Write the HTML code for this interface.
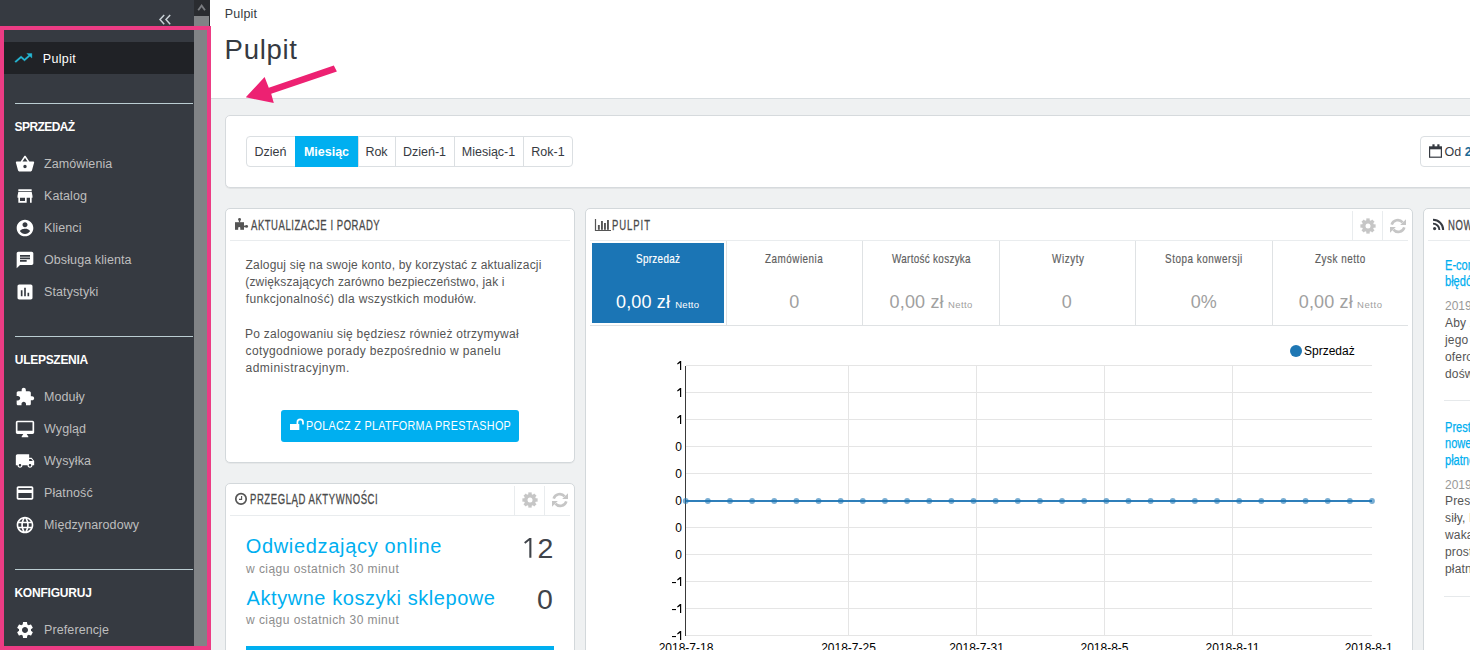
<!DOCTYPE html>
<html><head><meta charset="utf-8"><style>
html,body{margin:0;padding:0;}
body{width:1470px;height:650px;overflow:hidden;position:relative;background:#eff1f2;font-family:"Liberation Sans", sans-serif;}
.t{position:absolute;white-space:nowrap;line-height:1;font-family:"Liberation Sans", sans-serif;}
small{font-size:10px;}
.st{font-family:"Liberation Sans",sans-serif;}
</style></head><body>
<div style="position:absolute;left:210px;top:0px;width:1260px;height:98px;background:#fff"></div>
<div style="position:absolute;left:210px;top:98px;width:1260px;height:1px;background:#d8dde0"></div>
<div class="t" style="left:224.8px;top:8px;font-size:12.5px;color:#363a41;font-weight:400;letter-spacing:0.2px;">Pulpit</div>
<div class="t" style="left:224.6px;top:36px;font-size:27.5px;color:#363a41;font-weight:400;letter-spacing:0.72px;">Pulpit</div>
<div style="position:absolute;left:225px;top:115px;width:1300px;height:73px;background:#fff;border:1px solid #d6dadd;border-radius:5px;box-shadow:0 1px 0 rgba(0,0,0,.05);box-sizing:border-box"></div>
<div style="position:absolute;left:246px;top:136px;width:327px;height:31px;border:1px solid #dbdfe2;border-radius:4px;box-sizing:border-box;background:#fff"></div>
<div class="t" style="left:246px;top:146px;width:49px;text-align:center;font-size:12.5px;color:#363a41">Dzień</div>
<div style="position:absolute;left:295px;top:136px;width:63px;height:31px;background:#00aff0"></div>
<div class="t" style="left:295px;top:146px;width:63px;text-align:center;font-size:12.5px;font-weight:700;color:#fff">Miesiąc</div>
<div style="position:absolute;left:358px;top:137px;width:1px;height:29px;background:#dbdfe2"></div>
<div class="t" style="left:358px;top:146px;width:37px;text-align:center;font-size:12.5px;color:#363a41">Rok</div>
<div style="position:absolute;left:395px;top:137px;width:1px;height:29px;background:#dbdfe2"></div>
<div class="t" style="left:395px;top:146px;width:59px;text-align:center;font-size:12.5px;color:#363a41">Dzień-1</div>
<div style="position:absolute;left:454px;top:137px;width:1px;height:29px;background:#dbdfe2"></div>
<div class="t" style="left:454px;top:146px;width:69px;text-align:center;font-size:12.5px;color:#363a41">Miesiąc-1</div>
<div style="position:absolute;left:523px;top:137px;width:1px;height:29px;background:#dbdfe2"></div>
<div class="t" style="left:523px;top:146px;width:50px;text-align:center;font-size:12.5px;color:#363a41">Rok-1</div>
<div style="position:absolute;left:1420px;top:136px;width:80px;height:31px;border:1px solid #dbdfe2;border-radius:4px;box-sizing:border-box;background:#fff"></div>
<svg style="position:absolute;left:1428px;top:143px" width="15" height="16" viewBox="0 0 15 16"><rect x="1.6" y="5" width="11.8" height="9.2" fill="none" stroke="#363a41" stroke-width="1.2"/><rect x="1" y="3.3" width="13" height="3" fill="#363a41"/><rect x="4.4" y="1.3" width="2.2" height="3" fill="#363a41"/><rect x="9.3" y="1.3" width="2.2" height="3" fill="#363a41"/></svg>
<div class="t" style="left:1444.5px;top:146px;font-size:12.5px;color:#363a41;font-weight:400;letter-spacing:0px;">Od <b style="color:#1b6a95">2018</b></div>
<div style="position:absolute;left:225px;top:208px;width:350px;height:255px;background:#fff;border:1px solid #d3d8db;border-radius:5px;box-sizing:border-box;box-shadow:0 1px 0 rgba(0,0,0,.04)"></div>
<div style="position:absolute;left:230px;top:240px;width:340px;height:1px;background:#e9ecee"></div>
<svg style="position:absolute;left:234px;top:217px" width="16" height="14" viewBox="0 0 16 14"><g fill="#555"><rect x="1" y="5.2" width="9" height="7.6"/><circle cx="5.55" cy="2.5" r="1.45"/><rect x="4.9" y="3" width="1.3" height="2.5"/><rect x="10" y="8.6" width="2" height="1.6"/><circle cx="12.6" cy="9.4" r="1.45"/></g><path d="M4.2 12.9V11a1.05 1.05 0 0 1 2.1 0V12.9Z" fill="#fff"/></svg>
<div class="t" style="left:251.0px;top:218px;font-size:14px;color:#4a4a4a;font-weight:400;letter-spacing:0.786px;transform:scaleX(0.68);transform-origin:0 0;-webkit-text-stroke:0.3px #4a4a4a;">AKTUALIZACJE I PORADY</div>
<div class="t" style="left:245.6px;top:259px;font-size:12px;color:#555;font-weight:400;letter-spacing:0.178px;">Zaloguj się na swoje konto, by korzystać z aktualizacji</div>
<div class="t" style="left:245.3px;top:276px;font-size:12px;color:#555;font-weight:400;letter-spacing:0.161px;">(zwiększających zarówno bezpieczeństwo, jak i</div>
<div class="t" style="left:245.8px;top:293px;font-size:12px;color:#555;font-weight:400;letter-spacing:0.342px;">funkcjonalność) dla wszystkich modułów.</div>
<div class="t" style="left:245.0px;top:328px;font-size:12px;color:#555;font-weight:400;letter-spacing:0.256px;">Po zalogowaniu się będziesz również otrzymywał</div>
<div class="t" style="left:245.5px;top:345px;font-size:12px;color:#555;font-weight:400;letter-spacing:0.377px;">cotygodniowe porady bezpośrednio w panelu</div>
<div class="t" style="left:245.5px;top:362px;font-size:12px;color:#555;font-weight:400;letter-spacing:0.487px;">administracyjnym.</div>
<div style="position:absolute;left:281px;top:410px;width:238px;height:32px;background:#00aff0;border-radius:3px"></div>
<svg style="position:absolute;left:289px;top:418px" width="16" height="14" viewBox="0 0 16 14"><rect x="1" y="6" width="9.3" height="6" fill="#fff"/><path d="M8.4 6.2V4.2a2.8 2.8 0 0 1 5.6 0v2.4" fill="none" stroke="#fff" stroke-width="1.7"/></svg>
<div class="t" style="left:305.7px;top:420px;font-size:12px;color:#fff;font-weight:400;letter-spacing:0.332px;transform:scaleX(0.9);transform-origin:0 0;">POLACZ Z PLATFORMA PRESTASHOP</div>
<div style="position:absolute;left:225px;top:483px;width:350px;height:300px;background:#fff;border:1px solid #d3d8db;border-radius:5px;box-sizing:border-box;box-shadow:0 1px 0 rgba(0,0,0,.04)"></div>
<div style="position:absolute;left:230px;top:515px;width:340px;height:1px;background:#e9ecee"></div>
<svg style="position:absolute;left:233px;top:491px" width="16" height="16" viewBox="0 0 16 16"><circle cx="8" cy="7.9" r="5.2" fill="none" stroke="#555" stroke-width="1.7"/><path d="M8.6 5v3.4H6" fill="none" stroke="#555" stroke-width="1.1"/></svg>
<div class="t" style="left:250.25px;top:492px;font-size:14px;color:#4a4a4a;font-weight:400;letter-spacing:0.833px;transform:scaleX(0.68);transform-origin:0 0;-webkit-text-stroke:0.3px #4a4a4a;">PRZEGLĄD AKTYWNOŚCI</div>
<div style="position:absolute;left:514px;top:486px;width:1px;height:29px;background:#e9ecee"></div>
<div style="position:absolute;left:544px;top:486px;width:1px;height:29px;background:#e9ecee"></div>
<svg style="position:absolute;left:521px;top:491px" width="18" height="18" viewBox="-9 -9 18 18"><g fill="#c6c6c6"><rect x="-1.7" y="-7.6" width="3.4" height="4" transform="rotate(0)"/><rect x="-1.7" y="-7.6" width="3.4" height="4" transform="rotate(45)"/><rect x="-1.7" y="-7.6" width="3.4" height="4" transform="rotate(90)"/><rect x="-1.7" y="-7.6" width="3.4" height="4" transform="rotate(135)"/><rect x="-1.7" y="-7.6" width="3.4" height="4" transform="rotate(180)"/><rect x="-1.7" y="-7.6" width="3.4" height="4" transform="rotate(225)"/><rect x="-1.7" y="-7.6" width="3.4" height="4" transform="rotate(270)"/><rect x="-1.7" y="-7.6" width="3.4" height="4" transform="rotate(315)"/></g><circle r="6" fill="#c6c6c6"/><circle r="2.5" fill="#fff"/></svg>
<svg style="position:absolute;left:551px;top:491px" width="18" height="18" viewBox="-9 -9 18 18"><g fill="none" stroke="#c6c6c6" stroke-width="2.6"><path d="M-6.3 -1.3 A6.3 6.3 0 0 1 4.6 -3.6"/><path d="M6.3 1.3 A6.3 6.3 0 0 1 -4.6 3.6"/></g><path d="M8 -6.8 V-1 H2.2 Z" fill="#c6c6c6"/><path d="M-8 6.8 V1 H-2.2 Z" fill="#c6c6c6"/></svg>
<div class="t" style="left:245.7px;top:536px;font-size:20px;color:#00aff0;font-weight:400;letter-spacing:0.678px;">Odwiedzający online</div>
<div class="t" style="left:246.0px;top:563px;font-size:12px;color:#8c8c8c;font-weight:400;letter-spacing:0.452px;">w ciągu ostatnich 30 minut</div>
<div class="t" style="left:246.6px;top:588px;font-size:20px;color:#00aff0;font-weight:400;letter-spacing:0.552px;">Aktywne koszyki sklepowe</div>
<div class="t" style="left:246.0px;top:614px;font-size:12px;color:#8c8c8c;font-weight:400;letter-spacing:0.452px;">w ciągu ostatnich 30 minut</div>
<div class="t" style="left:537.4px;top:534px;font-size:28.5px;color:#3f4349;font-weight:400;letter-spacing:0px;">2</div>
<svg style="position:absolute;left:520px;top:535px" width="16" height="25"><path d="M9.3 2.9 H11.4 V22.7 H9.3 V5.6 L5.3 8.7 L4.1 7.2 Z" fill="#3f4349"/></svg>
<div class="t" style="left:536.9px;top:585px;font-size:28.5px;color:#3f4349;font-weight:400;letter-spacing:0px;">0</div>
<div style="position:absolute;left:246px;top:646px;width:308px;height:10px;background:#00aff0"></div>
<div style="position:absolute;left:585px;top:208px;width:828px;height:500px;background:#fff;border:1px solid #d3d8db;border-radius:5px;box-sizing:border-box;box-shadow:0 1px 0 rgba(0,0,0,.04)"></div>
<div style="position:absolute;left:590px;top:240px;width:818px;height:1px;background:#e9ecee"></div>
<svg style="position:absolute;left:594px;top:218px" width="18" height="14" viewBox="0 0 18 14"><path d="M1.5 1v11.5H17" fill="none" stroke="#555" stroke-width="1.2"/><rect x="3.9" y="7" width="1.9" height="4.8" fill="#555"/><rect x="7" y="3" width="1.9" height="8.8" fill="#555"/><rect x="10" y="5" width="1.9" height="6.8" fill="#555"/><rect x="13" y="2" width="1.9" height="9.8" fill="#555"/></svg>
<div class="t" style="left:612.25px;top:218px;font-size:14px;color:#4a4a4a;font-weight:400;letter-spacing:1.362px;transform:scaleX(0.68);transform-origin:0 0;-webkit-text-stroke:0.3px #4a4a4a;">PULPIT</div>
<div style="position:absolute;left:1352px;top:211px;width:1px;height:29px;background:#e9ecee"></div>
<div style="position:absolute;left:1382px;top:211px;width:1px;height:29px;background:#e9ecee"></div>
<svg style="position:absolute;left:1359px;top:216.5px" width="18" height="18" viewBox="-9 -9 18 18"><g fill="#c6c6c6"><rect x="-1.7" y="-7.6" width="3.4" height="4" transform="rotate(0)"/><rect x="-1.7" y="-7.6" width="3.4" height="4" transform="rotate(45)"/><rect x="-1.7" y="-7.6" width="3.4" height="4" transform="rotate(90)"/><rect x="-1.7" y="-7.6" width="3.4" height="4" transform="rotate(135)"/><rect x="-1.7" y="-7.6" width="3.4" height="4" transform="rotate(180)"/><rect x="-1.7" y="-7.6" width="3.4" height="4" transform="rotate(225)"/><rect x="-1.7" y="-7.6" width="3.4" height="4" transform="rotate(270)"/><rect x="-1.7" y="-7.6" width="3.4" height="4" transform="rotate(315)"/></g><circle r="6" fill="#c6c6c6"/><circle r="2.5" fill="#fff"/></svg>
<svg style="position:absolute;left:1389px;top:216.5px" width="18" height="18" viewBox="-9 -9 18 18"><g fill="none" stroke="#c6c6c6" stroke-width="2.6"><path d="M-6.3 -1.3 A6.3 6.3 0 0 1 4.6 -3.6"/><path d="M6.3 1.3 A6.3 6.3 0 0 1 -4.6 3.6"/></g><path d="M8 -6.8 V-1 H2.2 Z" fill="#c6c6c6"/><path d="M-8 6.8 V1 H-2.2 Z" fill="#c6c6c6"/></svg>
<div style="position:absolute;left:590px;top:325px;width:818px;height:1px;background:#dfe2e4"></div>
<div style="position:absolute;left:592px;top:243px;width:132px;height:80px;background:#1b75b5"></div>
<div style="position:absolute;left:726px;top:241px;width:1px;height:84px;background:#dfe2e4"></div>
<div style="position:absolute;left:862px;top:241px;width:1px;height:84px;background:#dfe2e4"></div>
<div style="position:absolute;left:999px;top:241px;width:1px;height:84px;background:#dfe2e4"></div>
<div style="position:absolute;left:1135px;top:241px;width:1px;height:84px;background:#dfe2e4"></div>
<div style="position:absolute;left:1272px;top:241px;width:1px;height:84px;background:#dfe2e4"></div>
<div class="t" style="left:635.84px;top:252px;font-size:13px;color:#fff;font-weight:400;letter-spacing:0.43px;transform:scaleX(0.76);transform-origin:0 0;-webkit-text-stroke:0.2px #fff;">Sprzedaż</div>
<div class="t" style="left:765.3px;top:252px;font-size:13px;color:#5f5f5f;font-weight:400;letter-spacing:0.662px;transform:scaleX(0.76);transform-origin:0 0;-webkit-text-stroke:0.2px #5f5f5f;">Zamówienia</div>
<div class="t" style="left:891.72px;top:252px;font-size:13px;color:#5f5f5f;font-weight:400;letter-spacing:0.406px;transform:scaleX(0.76);transform-origin:0 0;-webkit-text-stroke:0.2px #5f5f5f;">Wartość koszyka</div>
<div class="t" style="left:1051.52px;top:252px;font-size:13px;color:#5f5f5f;font-weight:400;letter-spacing:0.755px;transform:scaleX(0.76);transform-origin:0 0;-webkit-text-stroke:0.2px #5f5f5f;">Wizyty</div>
<div class="t" style="left:1165.34px;top:252px;font-size:13px;color:#5f5f5f;font-weight:400;letter-spacing:0.712px;transform:scaleX(0.76);transform-origin:0 0;-webkit-text-stroke:0.2px #5f5f5f;">Stopa konwersji</div>
<div class="t" style="left:1315.3px;top:252px;font-size:13px;color:#5f5f5f;font-weight:400;letter-spacing:0.696px;transform:scaleX(0.76);transform-origin:0 0;-webkit-text-stroke:0.2px #5f5f5f;">Zysk netto</div>
<div class="t" style="left:616.0px;top:293px;font-size:18px;color:#fff;font-weight:400;letter-spacing:0.15px;">0,00 zł</div>
<div class="t" style="left:675.2px;top:300px;font-size:9.5px;color:#fff;font-weight:400;letter-spacing:0.275px;">Netto</div>
<div class="t" style="left:789.3px;top:293px;font-size:18px;color:#a0a0a0;font-weight:400;letter-spacing:0px;">0</div>
<div class="t" style="left:889.6px;top:293px;font-size:18px;color:#a0a0a0;font-weight:400;letter-spacing:0.15px;">0,00 zł</div>
<div class="t" style="left:947.9px;top:300px;font-size:9.5px;color:#a0a0a0;font-weight:400;letter-spacing:0.45px;">Netto</div>
<div class="t" style="left:1061.8px;top:293px;font-size:18px;color:#a0a0a0;font-weight:400;letter-spacing:0px;">0</div>
<div class="t" style="left:1190.8px;top:293px;font-size:18px;color:#a0a0a0;font-weight:400;letter-spacing:0.0px;">0%</div>
<div class="t" style="left:1298.8px;top:293px;font-size:18px;color:#a0a0a0;font-weight:400;letter-spacing:0.133px;">0,00 zł</div>
<div class="t" style="left:1357.1px;top:300px;font-size:9.5px;color:#a0a0a0;font-weight:400;letter-spacing:0.55px;">Netto</div>
<svg style="position:absolute;left:0;top:0" width="1470" height="650">
<line x1="686" y1="365.5" x2="1372" y2="365.5" stroke="#e5e5e5" stroke-width="1"/>
<line x1="686" y1="392.5" x2="1372" y2="392.5" stroke="#e5e5e5" stroke-width="1"/>
<line x1="686" y1="419.5" x2="1372" y2="419.5" stroke="#e5e5e5" stroke-width="1"/>
<line x1="686" y1="446.5" x2="1372" y2="446.5" stroke="#e5e5e5" stroke-width="1"/>
<line x1="686" y1="473.5" x2="1372" y2="473.5" stroke="#e5e5e5" stroke-width="1"/>
<line x1="686" y1="500.5" x2="1372" y2="500.5" stroke="#e5e5e5" stroke-width="1"/>
<line x1="686" y1="527.5" x2="1372" y2="527.5" stroke="#e5e5e5" stroke-width="1"/>
<line x1="686" y1="554.5" x2="1372" y2="554.5" stroke="#e5e5e5" stroke-width="1"/>
<line x1="686" y1="581.5" x2="1372" y2="581.5" stroke="#e5e5e5" stroke-width="1"/>
<line x1="686" y1="608.5" x2="1372" y2="608.5" stroke="#e5e5e5" stroke-width="1"/>
<line x1="686" y1="635.5" x2="1372" y2="635.5" stroke="#e5e5e5" stroke-width="1"/>
<line x1="848.5" y1="366" x2="848.5" y2="636" stroke="#e5e5e5" stroke-width="1"/>
<line x1="976.5" y1="366" x2="976.5" y2="636" stroke="#e5e5e5" stroke-width="1"/>
<line x1="1104.5" y1="366" x2="1104.5" y2="636" stroke="#e5e5e5" stroke-width="1"/>
<line x1="1232.5" y1="366" x2="1232.5" y2="636" stroke="#e5e5e5" stroke-width="1"/>
<line x1="685.5" y1="366" x2="685.5" y2="636" stroke="#3a3a3a" stroke-width="1"/>
<path d="M680 361.1 H681.2 V370.0 H680 V362.9 L677.6 364.5 L677.1 363.6 Z" fill="#000"/>
<path d="M680 388.1 H681.2 V397.0 H680 V389.9 L677.6 391.5 L677.1 390.6 Z" fill="#000"/>
<path d="M680 415.1 H681.2 V424.0 H680 V416.9 L677.6 418.5 L677.1 417.6 Z" fill="#000"/>
<text x="682" y="450.5" text-anchor="end" class="st" font-size="12" fill="#000">0</text>
<text x="682" y="477.5" text-anchor="end" class="st" font-size="12" fill="#000">0</text>
<text x="682" y="504.5" text-anchor="end" class="st" font-size="12" fill="#000">0</text>
<text x="682" y="531.5" text-anchor="end" class="st" font-size="12" fill="#000">0</text>
<text x="682" y="558.5" text-anchor="end" class="st" font-size="12" fill="#000">0</text>
<path d="M680 577.1 H681.2 V586.0 H680 V578.9 L677.6 580.5 L677.1 579.6 Z" fill="#000"/>
<rect x="672" y="582.0" width="4" height="1.1" fill="#000"/>
<path d="M680 604.1 H681.2 V613.0 H680 V605.9 L677.6 607.5 L677.1 606.6 Z" fill="#000"/>
<rect x="672" y="609.0" width="4" height="1.1" fill="#000"/>
<path d="M680 631.1 H681.2 V640.0 H680 V632.9 L677.6 634.5 L677.1 633.6 Z" fill="#000"/>
<rect x="672" y="636.0" width="4" height="1.1" fill="#000"/>
<line x1="686" y1="501" x2="1372" y2="501" stroke="#2f7fba" stroke-width="2"/>
<circle cx="685.70" cy="501" r="2.9" fill="#1f77b4" fill-opacity="0.6"/>
<circle cx="707.84" cy="501" r="2.9" fill="#1f77b4" fill-opacity="0.6"/>
<circle cx="729.98" cy="501" r="2.9" fill="#1f77b4" fill-opacity="0.6"/>
<circle cx="752.12" cy="501" r="2.9" fill="#1f77b4" fill-opacity="0.6"/>
<circle cx="774.25" cy="501" r="2.9" fill="#1f77b4" fill-opacity="0.6"/>
<circle cx="796.39" cy="501" r="2.9" fill="#1f77b4" fill-opacity="0.6"/>
<circle cx="818.53" cy="501" r="2.9" fill="#1f77b4" fill-opacity="0.6"/>
<circle cx="840.67" cy="501" r="2.9" fill="#1f77b4" fill-opacity="0.6"/>
<circle cx="862.81" cy="501" r="2.9" fill="#1f77b4" fill-opacity="0.6"/>
<circle cx="884.95" cy="501" r="2.9" fill="#1f77b4" fill-opacity="0.6"/>
<circle cx="907.09" cy="501" r="2.9" fill="#1f77b4" fill-opacity="0.6"/>
<circle cx="929.23" cy="501" r="2.9" fill="#1f77b4" fill-opacity="0.6"/>
<circle cx="951.36" cy="501" r="2.9" fill="#1f77b4" fill-opacity="0.6"/>
<circle cx="973.50" cy="501" r="2.9" fill="#1f77b4" fill-opacity="0.6"/>
<circle cx="995.64" cy="501" r="2.9" fill="#1f77b4" fill-opacity="0.6"/>
<circle cx="1017.78" cy="501" r="2.9" fill="#1f77b4" fill-opacity="0.6"/>
<circle cx="1039.92" cy="501" r="2.9" fill="#1f77b4" fill-opacity="0.6"/>
<circle cx="1062.06" cy="501" r="2.9" fill="#1f77b4" fill-opacity="0.6"/>
<circle cx="1084.20" cy="501" r="2.9" fill="#1f77b4" fill-opacity="0.6"/>
<circle cx="1106.34" cy="501" r="2.9" fill="#1f77b4" fill-opacity="0.6"/>
<circle cx="1128.47" cy="501" r="2.9" fill="#1f77b4" fill-opacity="0.6"/>
<circle cx="1150.61" cy="501" r="2.9" fill="#1f77b4" fill-opacity="0.6"/>
<circle cx="1172.75" cy="501" r="2.9" fill="#1f77b4" fill-opacity="0.6"/>
<circle cx="1194.89" cy="501" r="2.9" fill="#1f77b4" fill-opacity="0.6"/>
<circle cx="1217.03" cy="501" r="2.9" fill="#1f77b4" fill-opacity="0.6"/>
<circle cx="1239.17" cy="501" r="2.9" fill="#1f77b4" fill-opacity="0.6"/>
<circle cx="1261.31" cy="501" r="2.9" fill="#1f77b4" fill-opacity="0.6"/>
<circle cx="1283.45" cy="501" r="2.9" fill="#1f77b4" fill-opacity="0.6"/>
<circle cx="1305.58" cy="501" r="2.9" fill="#1f77b4" fill-opacity="0.6"/>
<circle cx="1327.72" cy="501" r="2.9" fill="#1f77b4" fill-opacity="0.6"/>
<circle cx="1349.86" cy="501" r="2.9" fill="#1f77b4" fill-opacity="0.6"/>
<circle cx="1372.00" cy="501" r="2.9" fill="#1f77b4" fill-opacity="0.6"/>
<defs><clipPath id="xc"><rect x="600" y="630" width="793" height="30"/></clipPath></defs><g clip-path="url(#xc)">
<text x="686" y="652" text-anchor="middle" class="st" font-size="12" fill="#000">2018-7-18</text>
<text x="848.5" y="652" text-anchor="middle" class="st" font-size="12" fill="#000">2018-7-25</text>
<text x="976.5" y="652" text-anchor="middle" class="st" font-size="12" fill="#000">2018-7-31</text>
<text x="1104.5" y="652" text-anchor="middle" class="st" font-size="12" fill="#000">2018-8-5</text>
<text x="1232.5" y="652" text-anchor="middle" class="st" font-size="12" fill="#000">2018-8-11</text>
<text x="1372" y="652" text-anchor="middle" class="st" font-size="12" fill="#000">2018-8-17</text>
</g>
<circle cx="1296" cy="351" r="6" fill="#1f77b4"/>
<text x="1304" y="355" class="st" font-size="12" fill="#000">Sprzedaż</text>
</svg>
<div style="position:absolute;left:1423px;top:208px;width:300px;height:500px;background:#fff;border:1px solid #d3d8db;border-radius:5px;box-sizing:border-box;box-shadow:0 1px 0 rgba(0,0,0,.04)"></div>
<div style="position:absolute;left:1428px;top:240px;width:300px;height:1px;background:#e9ecee"></div>
<svg style="position:absolute;left:1432px;top:218px" width="14" height="14" viewBox="0 0 14 14"><circle cx="2.6" cy="10.6" r="1.6" fill="#363a41"/><path d="M1 5.6a6.4 6.4 0 0 1 6.4 6.4" fill="none" stroke="#363a41" stroke-width="1.9"/><path d="M1 1.8a10.2 10.2 0 0 1 10.2 10.2" fill="none" stroke="#363a41" stroke-width="1.9"/></svg>
<div class="t" style="left:1447.5px;top:218px;font-size:14px;color:#4a4a4a;font-weight:400;letter-spacing:0.9px;transform:scaleX(0.68);transform-origin:0 0;-webkit-text-stroke:0.3px #4a4a4a;">NOWOŚCI</div>
<div class="t" style="left:1445px;top:258px;font-size:14px;color:#00aff0;font-weight:400;letter-spacing:0px;transform:scaleX(0.79);transform-origin:0 0;-webkit-text-stroke:0.25px #00aff0;">E-commerce w Polsce</div>
<div class="t" style="left:1445px;top:274px;font-size:14px;color:#00aff0;font-weight:400;letter-spacing:0px;transform:scaleX(0.79);transform-origin:0 0;-webkit-text-stroke:0.25px #00aff0;">błędów</div>
<div class="t" style="left:1445px;top:300px;font-size:12px;color:#999;font-weight:400;letter-spacing:0px;">2019-01-10</div>
<div class="t" style="left:1445px;top:317px;font-size:12px;color:#555;font-weight:400;letter-spacing:0.17px;">Aby zwiększyć</div>
<div class="t" style="left:1445px;top:334px;font-size:12px;color:#555;font-weight:400;letter-spacing:0.17px;">jego</div>
<div class="t" style="left:1445px;top:351px;font-size:12px;color:#555;font-weight:400;letter-spacing:0.17px;">oferowania</div>
<div class="t" style="left:1445px;top:368px;font-size:12px;color:#555;font-weight:400;letter-spacing:0.17px;">doświadczenie</div>
<div style="position:absolute;left:1444px;top:400px;width:100px;height:1px;background:#e6e9eb"></div>
<div class="t" style="left:1445px;top:420px;font-size:14px;color:#00aff0;font-weight:400;letter-spacing:0px;transform:scaleX(0.79);transform-origin:0 0;-webkit-text-stroke:0.25px #00aff0;">PrestaShop</div>
<div class="t" style="left:1445px;top:436px;font-size:14px;color:#00aff0;font-weight:400;letter-spacing:0px;transform:scaleX(0.79);transform-origin:0 0;-webkit-text-stroke:0.25px #00aff0;">nowe</div>
<div class="t" style="left:1445px;top:453px;font-size:14px;color:#00aff0;font-weight:400;letter-spacing:0px;transform:scaleX(0.79);transform-origin:0 0;-webkit-text-stroke:0.25px #00aff0;">płatności</div>
<div class="t" style="left:1445px;top:479px;font-size:12px;color:#999;font-weight:400;letter-spacing:0px;">2019-01-08</div>
<div class="t" style="left:1445px;top:495px;font-size:12px;color:#555;font-weight:400;letter-spacing:0.17px;">PrestaShop</div>
<div class="t" style="left:1445px;top:512px;font-size:12px;color:#555;font-weight:400;letter-spacing:0.17px;">siły, l</div>
<div class="t" style="left:1445px;top:529px;font-size:12px;color:#555;font-weight:400;letter-spacing:0.17px;">wakacje</div>
<div class="t" style="left:1445px;top:546px;font-size:12px;color:#555;font-weight:400;letter-spacing:0.17px;">prosto</div>
<div class="t" style="left:1445px;top:563px;font-size:12px;color:#555;font-weight:400;letter-spacing:0.17px;">płatności</div>
<div style="position:absolute;left:1444px;top:596px;width:100px;height:1px;background:#e6e9eb"></div>
<div style="position:absolute;left:0px;top:0px;width:194px;height:650px;background:#363a41"></div>
<div style="position:absolute;left:194px;top:0px;width:16px;height:650px;background:#2a2c30"></div>
<svg style="position:absolute;left:194px;top:0" width="16" height="16"><path d="M4.2 10.2 L7.6 5.6 L11 10.2" fill="none" stroke="#7a7c80" stroke-width="1.8"/></svg>
<div style="position:absolute;left:194px;top:16px;width:15px;height:634px;background:#818386"></div>
<svg style="position:absolute;left:157px;top:12px" width="18" height="16"><path d="M7.2 3 L3 7.6 L7.2 12.2 M13.2 3 L9 7.6 L13.2 12.2" fill="none" stroke="#c9d1d6" stroke-width="1.5"/></svg>
<div style="position:absolute;left:0px;top:42px;width:194px;height:32px;background:#202226"></div>
<svg style="position:absolute;left:13.2px;top:49.3px" width="20.6" height="18" viewBox="0 0 24 24" preserveAspectRatio="none"><path fill="#25b9d7" stroke="#25b9d7" stroke-width="0.4" d="M16 6l2.29 2.29-4.88 4.88-4-4L2 16.59 3.41 18l6-6 4 4 6.3-6.29L22 12V6z"/></svg>
<div class="t" style="left:42.7px;top:53px;font-size:12.5px;color:#fff;font-weight:400;letter-spacing:0.36px;">Pulpit</div>
<div style="position:absolute;left:15px;top:103px;width:178px;height:1px;background:#bbcdd2"></div>
<div style="position:absolute;left:15px;top:336px;width:178px;height:1px;background:#bbcdd2"></div>
<div style="position:absolute;left:15px;top:569px;width:178px;height:1px;background:#bbcdd2"></div>
<div class="t" style="left:14.6px;top:121px;font-size:12px;color:#fff;font-weight:700;letter-spacing:-0.586px;">SPRZEDAŻ</div>
<div class="t" style="left:14.8px;top:354px;font-size:12px;color:#fff;font-weight:700;letter-spacing:-0.289px;">ULEPSZENIA</div>
<div class="t" style="left:14.4px;top:587px;font-size:12px;color:#fff;font-weight:700;letter-spacing:-0.211px;">KONFIGURUJ</div>
<svg style="position:absolute;left:14.8px;top:154px" width="20" height="20" viewBox="0 0 24 24"><path fill="#fff" d="M17.21 9l-4.38-6.56c-.19-.28-.51-.42-.83-.42-.32 0-.64.14-.83.43L6.79 9H2c-.55 0-1 .45-1 1 0 .09.01.18.04.27l2.54 9.27c.23.84 1 1.46 1.92 1.46h13c.92 0 1.690-.62 1.93-1.46l2.54-9.27L23 10c0-.55-.45-1-1-1h-4.79zM9 9l3-4.4L15 9H9zm3 8c-1.1 0-2-.9-2-2s.9-2 2-2 2 .9 2 2-.9 2-2 2z"/></svg>
<div class="t" style="left:44px;top:158px;font-size:12.5px;color:#bebebe;font-weight:400;letter-spacing:0.1px;">Zamówienia</div>
<svg style="position:absolute;left:14.8px;top:186px" width="20" height="20" viewBox="0 0 24 24"><path fill="#fff" d="M20 4H4v2h16V4zm1 10v-2l-1-5H4l-1 5v2h1v6h10v-6h4v6h2v-6h1zm-9 4H6v-4h6v4z"/></svg>
<div class="t" style="left:44px;top:190px;font-size:12.5px;color:#bebebe;font-weight:400;letter-spacing:0.1px;">Katalog</div>
<svg style="position:absolute;left:14.8px;top:218px" width="20" height="20" viewBox="0 0 24 24"><path fill="#fff" d="M12 2C6.48 2 2 6.48 2 12s4.48 10 10 10 10-4.48 10-10S17.52 2 12 2zm0 3c1.66 0 3 1.34 3 3s-1.34 3-3 3-3-1.34-3-3 1.34-3 3-3zm0 14.2c-2.5 0-4.71-1.28-6-3.22.03-1.990 4-3.08 6-3.08 1.99 0 5.97 1.09 6 3.08-1.29 1.94-3.5 3.22-6 3.22z"/></svg>
<div class="t" style="left:44px;top:222px;font-size:12.5px;color:#bebebe;font-weight:400;letter-spacing:0.1px;">Klienci</div>
<svg style="position:absolute;left:14.8px;top:250px" width="20" height="20" viewBox="0 0 24 24"><path fill="#fff" d="M20 2H4c-1.1 0-1.99.9-1.99 2L2 22l4-4h14c1.1 0 2-.9 2-2V4c0-1.1-.9-2-2-2zM6 9h12v2H6V9zm8 5H6v-2h8v2zm4-6H6V6h12v2z"/></svg>
<div class="t" style="left:44px;top:254px;font-size:12.5px;color:#bebebe;font-weight:400;letter-spacing:0.1px;">Obsługa klienta</div>
<svg style="position:absolute;left:14.8px;top:282px" width="20" height="20" viewBox="0 0 24 24"><path fill="#fff" d="M19 3H5c-1.1 0-2 .9-2 2v14c0 1.1.9 2 2 2h14c1.1 0 2-.9 2-2V5c0-1.1-.9-2-2-2zM9 17H7v-7h2v7zm4 0h-2V7h2v10zm4 0h-2v-4h2v4z"/></svg>
<div class="t" style="left:44px;top:286px;font-size:12.5px;color:#bebebe;font-weight:400;letter-spacing:0.1px;">Statystyki</div>
<svg style="position:absolute;left:14.8px;top:387px" width="20" height="20" viewBox="0 0 24 24"><path fill="#fff" d="M20.5 11H19V7c0-1.1-.9-2-2-2h-4V3.5C13 2.12 11.88 1 10.5 1S8 2.12 8 3.5V5H4c-1.1 0-1.99.9-1.99 2v3.8H3.5c1.49 0 2.7 1.21 2.7 2.7s-1.210 2.7-2.7 2.7H2V20c0 1.1.9 2 2 2h3.8v-1.5c0-1.49 1.21-2.7 2.7-2.7 1.49 0 2.7 1.21 2.7 2.7V22H17c1.1 0 2-.9 2-2v-4h1.5c1.38 0 2.5-1.12 2.5-2.5S21.88 11 20.5 11z"/></svg>
<div class="t" style="left:44px;top:391px;font-size:12.5px;color:#bebebe;font-weight:400;letter-spacing:0.1px;">Moduły</div>
<svg style="position:absolute;left:14.8px;top:419px" width="20" height="20" viewBox="0 0 24 24"><path fill="#fff" d="M21 2H3c-1.1 0-2 .9-2 2v12c0 1.1.9 2 2 2h7l-2 3v1h8v-1l-2-3h7c1.1 0 2-.9 2-2V4c0-1.1-.9-2-2-2zm0 12H3V4h18v10z"/></svg>
<div class="t" style="left:44px;top:423px;font-size:12.5px;color:#bebebe;font-weight:400;letter-spacing:0.1px;">Wygląd</div>
<svg style="position:absolute;left:14.8px;top:451px" width="20" height="20" viewBox="0 0 24 24"><path fill="#fff" d="M20 8h-3V4H3c-1.1 0-2 .9-2 2v11h2c0 1.66 1.34 3 3 3s3-1.34 3-3h6c0 1.66 1.34 3 3 3s3-1.34 3-3h2v-5l-3-4zM6 18.5c-.83 0-1.5-.67-1.5-1.5s.67-1.5 1.5-1.5 1.5.67 1.5 1.5-.67 1.5-1.5 1.5zm13.5-9l1.96 2.5H17V9.5h2.5zm-1.5 9c-.83 0-1.5-.67-1.5-1.5s.67-1.5 1.5-1.5 1.5.67 1.5 1.5-.67 1.5-1.5 1.5z"/></svg>
<div class="t" style="left:44px;top:455px;font-size:12.5px;color:#bebebe;font-weight:400;letter-spacing:0.1px;">Wysyłka</div>
<svg style="position:absolute;left:14.8px;top:483px" width="20" height="20" viewBox="0 0 24 24"><path fill="#fff" d="M20 4H4c-1.11 0-1.99.89-1.99 2L2 18c0 1.11.89 2 2 2h16c1.11 0 2-.89 2-2V6c0-1.11-.89-2-2-2zm0 14H4v-6h16v6zm0-10H4V6h16v2z"/></svg>
<div class="t" style="left:44px;top:487px;font-size:12.5px;color:#bebebe;font-weight:400;letter-spacing:0.1px;">Płatność</div>
<svg style="position:absolute;left:14.8px;top:515px" width="20" height="20" viewBox="0 0 24 24"><path fill="#fff" d="M11.99 2C6.47 2 2 6.48 2 12s4.47 10 9.99 10C17.52 22 22 17.52 22 12S17.52 2 11.99 2zm6.93 6h-2.95c-.32-1.25-.78-2.45-1.38-3.56 1.84.63 3.37 1.91 4.33 3.56zM12 4.04c.83 1.2 1.48 2.53 1.91 3.96h-3.82c.43-1.43 1.08-2.76 1.91-3.96zM4.26 14C4.1 13.36 4 12.69 4 12s.1-1.36.26-2h3.38c-.08.66-.14 1.32-.14 2 0 .68.06 1.34.14 2H4.26zm.82 2h2.95c.32 1.25.78 2.45 1.38 3.56-1.84-.63-3.37-1.9-4.33-3.56zm2.95-8H5.08c.96-1.66 2.49-2.93 4.33-3.56C8.81 5.55 8.35 6.75 8.03 8zM12 19.96c-.83-1.2-1.48-2.53-1.91-3.96h3.820c-.43 1.43-1.08 2.76-1.91 3.96zM14.34 14H9.66c-.09-.66-.16-1.32-.16-2 0-.68.07-1.35.16-2h4.68c.09.65.16 1.32.16 2 0 .68-.07 1.34-.16 2zm.25 5.56c.6-1.11 1.06-2.31 1.38-3.56h2.950c-.96 1.65-2.49 2.93-4.33 3.56zM16.36 14c.08-.66.14-1.32.14-2 0-.68-.06-1.34-.14-2h3.38c.16.64.26 1.31.26 2s-.1 1.36-.26 2h-3.38z"/></svg>
<div class="t" style="left:44px;top:519px;font-size:12.5px;color:#bebebe;font-weight:400;letter-spacing:0.1px;">Międzynarodowy</div>
<svg style="position:absolute;left:14.8px;top:620px" width="20" height="20" viewBox="0 0 24 24"><path fill="#fff" d="M19.14 12.94c.04-.3.06-.61.06-.94 0-.32-.02-.64-.07-.94l2.03-1.58c.18-.14.23-.41.12-.61l-1.92-3.32c-.12-.22-.37-.29-.59-.22l-2.39.96c-.5-.38-1.03-.7-1.62-.94l-.36-2.54c-.04-.24-.24-.41-.48-.41h-3.84c-.24 0-.43.17-.47.41l-.36 2.54c-.59.24-1.13.57-1.62.94l-2.39-.96c-.22-.08-.47 0-.59.22L2.74 8.87c-.12.21-.08.47.12.61l2.03 1.58c-.05.3-.09.63-.09.94s.02.64.07.94l-2.03 1.58c-.18.14-.23.41-.12.61l1.92 3.32c.12.22.37.29.59.22l2.39-.96c.5.38 1.03.7 1.62.94l.36 2.54c.05.24.24.41.48.41h3.84c.24 0 .44-.17.47-.41l.36-2.54c.59-.24 1.13-.56 1.62-.94l2.39.96c.22.08.47 0 .59-.22l1.92-3.32c.12-.22.07-.47-.12-.61l-2.01-1.58zM12 15.6c-1.98 0-3.6-1.62-3.6-3.6s1.62-3.6 3.6-3.6 3.6 1.62 3.6 3.6-1.62 3.6-3.6 3.6z"/></svg>
<div class="t" style="left:44px;top:624px;font-size:12.5px;color:#bebebe;font-weight:400;letter-spacing:0.1px;">Preferencje</div>
<div style="position:absolute;left:0px;top:26px;width:211px;height:624px;border:4px solid #ec3c84;box-sizing:border-box"></div>
<svg style="position:absolute;left:0;top:0" width="1470" height="650"><path d="M245.8 97.3 L264.6 76.9 L268.8 87.7 L333.8 65.4 L336.9 71.5 L271.2 93.8 L273.8 103.1 Z" fill="#ed2172"/></svg>
</body></html>
